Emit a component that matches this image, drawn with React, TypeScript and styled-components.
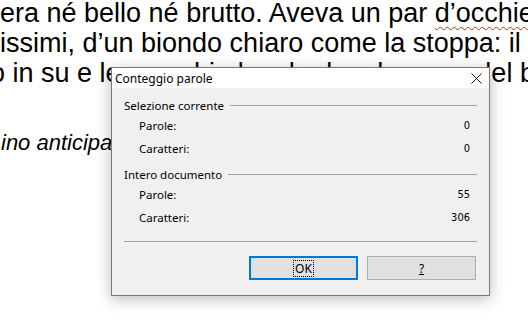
import React from 'react'
import styled, { createGlobalStyle } from 'styled-components'

const GlobalStyle = createGlobalStyle`
  html, body {
    margin: 0;
    padding: 0;
    background: #ffffff;
    overflow: hidden;
  }
`

type Stat = { label: string; value: string }

const sections: { title: string; stats: Stat[] }[] = [
  {
    title: 'Selezione corrente',
    stats: [
      { label: 'Parole:', value: '0' },
      { label: 'Caratteri:', value: '0' },
    ],
  },
  {
    title: 'Intero documento',
    stats: [
      { label: 'Parole:', value: '55' },
      { label: 'Caratteri:', value: '306' },
    ],
  },
]

export default function App() {
  return (
    <Page>
      <GlobalStyle />
      <Document>
        <Line>era né bello né brutto. Aveva un par <Misspelled>d’occhietti</Misspelled></Line>
        <Line>issimi, d’un biondo chiaro come la stoppa: il naso</Line>
        <Line $indent={-10}>o in su e le orecchie lunghe lunghe pure del bel mezzo</Line>
        <Italic>ino anticipato di quello che era</Italic>
      </Document>

      <Dialog role="dialog" aria-label="Conteggio parole">
        <TitleBar>
          <Title>Conteggio parole</Title>
          <CloseButton type="button" aria-label="Chiudi">
            <svg width="11" height="11" viewBox="0 0 11 11">
              <path d="M0.5 0.5 L10.5 10.5 M10.5 0.5 L0.5 10.5" stroke="#111" strokeWidth="1" fill="none" />
            </svg>
          </CloseButton>
        </TitleBar>
        <Body>
          {sections.map((s, i) => (
            <Group key={s.title} $first={i === 0}>
              <GroupHeader>
                <span>{s.title}</span>
                <Rule />
              </GroupHeader>
              {s.stats.map((st) => (
                <StatRow key={st.label}>
                  <span>{st.label}</span>
                  <Value>{st.value}</Value>
                </StatRow>
              ))}
            </Group>
          ))}
          <Separator />
          <Buttons>
            <Button type="button" $default>
              <Focus>OK</Focus>
            </Button>
            <Button type="button">
              <u>?</u>
            </Button>
          </Buttons>
        </Body>
      </Dialog>
    </Page>
  )
}

const Page = styled.div`
  position: relative;
  width: 528px;
  height: 330px;
  overflow: hidden;
  background: #ffffff;
`

const Document = styled.div`
  margin-top: -2px;
  font-family: 'Liberation Sans', Arial, sans-serif;
  color: #000;
`

const Line = styled.div<{ $indent?: number }>`
  font-size: 27px;
  line-height: 30px;
  white-space: nowrap;
  margin-left: ${({ $indent }) => $indent ?? 0}px;
`

const Misspelled = styled.span`
  text-decoration: underline wavy #e02020;
  text-decoration-thickness: 1px;
  text-underline-offset: 4px;
`

const Italic = styled.div`
  margin-top: 43px;
  font-size: 22px;
  line-height: 24px;
  font-style: italic;
  white-space: nowrap;
  margin-left: 1px;
`

const Dialog = styled.div`
  position: absolute;
  left: 111px;
  top: 67px;
  width: 377px;
  height: 227px;
  border: 1px solid #7a7a7a;
  background: #f0f0f0;
  box-shadow: 0 3px 14px rgba(0, 0, 0, 0.28);
  display: flex;
  flex-direction: column;
  font-family: 'Noto Sans', 'Segoe UI', sans-serif;
  font-size: 11.5px;
  color: #000;
`

const TitleBar = styled.div`
  height: 20px;
  background: #ffffff;
  display: flex;
  align-items: center;
  justify-content: space-between;
  padding: 0 7px 0 3px;
`

const Title = styled.span`
  font-size: 12px;
`

const CloseButton = styled.button`
  border: none;
  background: transparent;
  padding: 0;
  width: 11px;
  height: 11px;
  display: flex;
  svg {
    display: block;
  }
`

const Body = styled.div`
  flex: 1;
  padding: 9px 12px 0 12px;
  display: flex;
  flex-direction: column;
`

const Group = styled.div<{ $first?: boolean }>`
  margin-top: ${({ $first }) => ($first ? 0 : 6)}px;
  display: flex;
  flex-direction: column;
`

const GroupHeader = styled.div`
  height: 17px;
  display: flex;
  align-items: center;
  gap: 6px;
  white-space: nowrap;
`

const Rule = styled.div`
  flex: 1;
  height: 1px;
  background: #a0a0a0;
`

const StatRow = styled.div`
  height: 23px;
  display: flex;
  align-items: center;
  justify-content: space-between;
  padding: 0 7px 0 15px;
`

const Value = styled.span`
  font-family: 'DejaVu Sans Condensed', 'Liberation Sans Narrow', sans-serif;
  font-size: 11px;
`

const Separator = styled.div`
  height: 1px;
  background: #a0a0a0;
  margin-top: 12px;
`

const Buttons = styled.div`
  margin-top: 14px;
  display: flex;
  justify-content: flex-end;
  gap: 9px;
  padding-right: 1px;
`

const Button = styled.button<{ $default?: boolean }>`
  width: 109px;
  height: 24px;
  box-sizing: border-box;
  background: #e1e1e1;
  border: ${({ $default }) => ($default ? '2px solid #0078d7' : '1px solid #adadad')};
  font-family: 'Noto Sans', 'Segoe UI', sans-serif;
  font-size: 12px;
  color: #000;
  padding: 0;
  display: flex;
  align-items: center;
  justify-content: center;
`

const Focus = styled.span`
  outline: 1px dotted #000;
  outline-offset: 0;
  padding: 0 1px;
  line-height: 15px;
`
